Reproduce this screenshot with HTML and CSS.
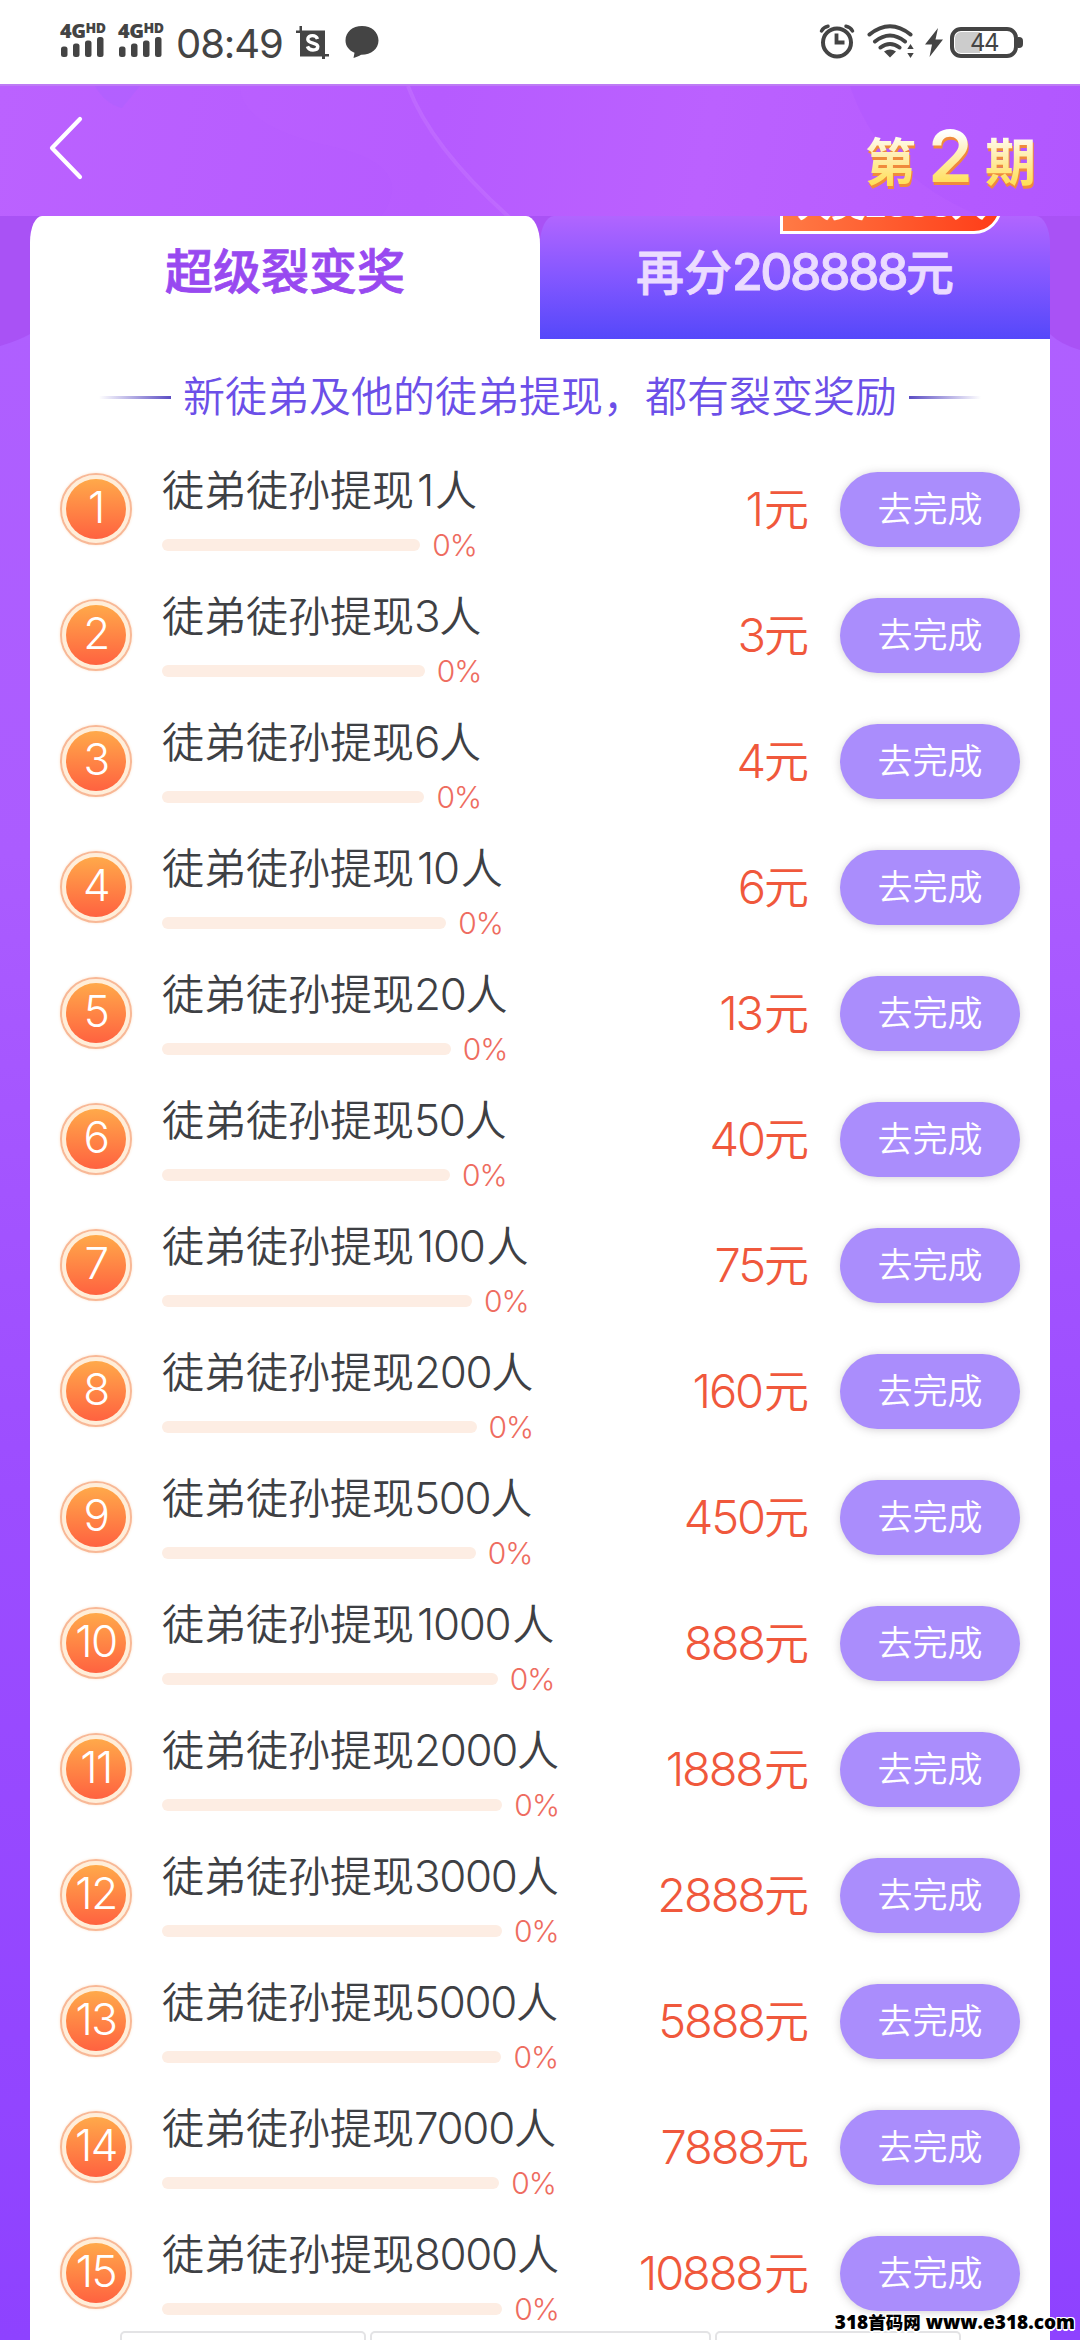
FILE: index.html
```html
<!DOCTYPE html>
<html lang="zh-CN">
<head>
<meta charset="utf-8">
<title>超级裂变奖</title>
<link rel="stylesheet" href="styles.css">
</head>
<body>
<header class="status">
  <div class="sim"><div class="net">4G<sup>HD</sup></div>
    <svg width="43" height="20" viewBox="0 0 43 20"><rect x="0" y="9.5" width="6.5" height="10.5" rx="2.5"/><rect x="12" y="6.5" width="6.5" height="13.5" rx="2.5"/><rect x="24" y="3.5" width="6.5" height="16.5" rx="2.5"/><rect x="36" y="0" width="6.5" height="20" rx="2.5"/></svg></div>
  <div class="sim"><div class="net">4G<sup>HD</sup></div>
    <svg width="43" height="20" viewBox="0 0 43 20"><rect x="0" y="9.5" width="6.5" height="10.5" rx="2.5"/><rect x="12" y="6.5" width="6.5" height="13.5" rx="2.5"/><rect x="24" y="3.5" width="6.5" height="16.5" rx="2.5"/><rect x="36" y="0" width="6.5" height="20" rx="2.5"/></svg></div>
  <time class="clock">08:49</time>
  <svg class="crop-icon" width="33" height="33" viewBox="0 0 33 33"><path d="M0 4.5h29v23.500h4v2.500h-4v2.500h-3v-2.500H4V7H0zM3.500 0h2.500v6h-2.500z"/><path d="M21.500 13c-.8-2.300-2.600-3.400-5-3.400-2.800 0-4.700 1.400-4.700 3.600 0 5 10 2.700 10 7.300 0 2.200-2 3.500-4.800 3.500-3 0-4.800-1.300-5.600-3.600" fill="none" stroke="#fff" stroke-width="3.400"/></svg>
  <svg class="bubble" width="34" height="32" viewBox="0 0 34 32"><path d="M17 0c9.500 0 16.500 6 16.500 14.500S26 29 16 28.800c-2 1.200-4.500 2.600-7.500 3.200l1-5.200C4 24.500.5 20 .5 14.500.5 6 7.500 0 17 0z"/></svg>
  <div class="status-right">
    <svg class="outline" width="36" height="36" viewBox="0 0 36 36" stroke="#444" stroke-linecap="round"><circle cx="18" cy="19.500" r="14" stroke-width="4"/><path d="M17.500 10.500V19.500H25.500" stroke-width="3.800" stroke-linecap="butt"/><path d="M2.500 8Q4.500 4 9 3.200M27 3.200Q31.500 4 33.500 8" stroke-width="3.500"/></svg>
    <svg class="outline wifi" width="47" height="36" viewBox="0 0 47 36" stroke="#444" stroke-width="4" stroke-linecap="round"><path d="M2.500 11.500Q23 -5 43.500 11.500M8 18.500Q23 6.500 38 18.500M13.500 24.500Q23 17.500 32.500 24.500"/><path d="M17 28.500Q23 24.500 29 28.500L23 34.500z" fill="#444" stroke="none"/><path d="M43.500 21l3.200 5h-6.400zM43.500 35l3.200-5h-6.400z" fill="#444" stroke="none"/></svg>
    <svg class="bolt" width="18" height="29" viewBox="0 0 18 29"><path d="M13 0L0 16.500h7L4.500 29 18 11.500h-7.500z"/></svg>
    <div class="battery"><i class="level"></i><span>44</span></div>
  </div>
</header>
<nav class="topbar">
  <svg class="rays" width="1080" height="130" viewBox="0 0 1080 130"><path class="outline" d="M408 0Q430 60 510 132" stroke="#c87aff" stroke-width="4" opacity=".45"/><path d="M0 0H408Q430 60 510 132H380Q420 80 330 60T240 0z" fill="#bd66ff" opacity=".2"/><path d="M850 0Q880 90 985 132H1080V0z" fill="#a94fff" opacity=".18"/><path d="M95 0Q105 18 122 22L140 0z" fill="#a060ff" opacity=".25"/></svg>
  <svg class="outline back" width="34" height="66" viewBox="0 0 34 66"><path d="M31 3L3 32 31 61" stroke="#fff" stroke-width="4.200" stroke-linecap="round" stroke-linejoin="round"/></svg>
  <div class="period"><span>第</span><b>2</b><span>期</span></div>
</nav>
<main class="stage">
  <svg class="waves" width="1080" height="160" viewBox="0 0 1080 160"><path d="M0 0H1080V134Q1060 128 1050 118H30Q20 124 0 130z" fill="#a74ef2" opacity=".75"/></svg>
  <section class="panel">
    <div class="tabs">
      <div class="tab active"><span>超级裂变奖</span></div>
      <div class="tab other"><span>再分<i class="n">208888</i>元</span>
        <div class="ribbon"><span>大奖2888人</span></div></div>
    </div>
    <div class="subtitle"><i class="line"></i><span>新徒弟及他的徒弟提现，都有裂变奖励</span><i class="line flip"></i></div>
    <ul class="tasks">
      <li class="task"><b class="badge">1</b><div class="info"><p>徒弟徒孙提现<i class="n one">1</i>人</p><div class="progress"><i class="bar"></i><em>0%</em></div></div><strong class="money"><i class="n one">1</i>元</strong><button>去完成</button></li>
      <li class="task"><b class="badge">2</b><div class="info"><p>徒弟徒孙提现<i class="n">3</i>人</p><div class="progress"><i class="bar"></i><em>0%</em></div></div><strong class="money"><i class="n">3</i>元</strong><button>去完成</button></li>
      <li class="task"><b class="badge">3</b><div class="info"><p>徒弟徒孙提现<i class="n">6</i>人</p><div class="progress"><i class="bar"></i><em>0%</em></div></div><strong class="money"><i class="n">4</i>元</strong><button>去完成</button></li>
      <li class="task"><b class="badge">4</b><div class="info"><p>徒弟徒孙提现<i class="n one">10</i>人</p><div class="progress"><i class="bar"></i><em>0%</em></div></div><strong class="money"><i class="n">6</i>元</strong><button>去完成</button></li>
      <li class="task"><b class="badge">5</b><div class="info"><p>徒弟徒孙提现<i class="n">20</i>人</p><div class="progress"><i class="bar"></i><em>0%</em></div></div><strong class="money"><i class="n one">13</i>元</strong><button>去完成</button></li>
      <li class="task"><b class="badge">6</b><div class="info"><p>徒弟徒孙提现<i class="n">50</i>人</p><div class="progress"><i class="bar"></i><em>0%</em></div></div><strong class="money"><i class="n">40</i>元</strong><button>去完成</button></li>
      <li class="task"><b class="badge">7</b><div class="info"><p>徒弟徒孙提现<i class="n one">100</i>人</p><div class="progress"><i class="bar"></i><em>0%</em></div></div><strong class="money"><i class="n">75</i>元</strong><button>去完成</button></li>
      <li class="task"><b class="badge">8</b><div class="info"><p>徒弟徒孙提现<i class="n">200</i>人</p><div class="progress"><i class="bar"></i><em>0%</em></div></div><strong class="money"><i class="n one">160</i>元</strong><button>去完成</button></li>
      <li class="task"><b class="badge">9</b><div class="info"><p>徒弟徒孙提现<i class="n">500</i>人</p><div class="progress"><i class="bar"></i><em>0%</em></div></div><strong class="money"><i class="n">450</i>元</strong><button>去完成</button></li>
      <li class="task"><b class="badge">10</b><div class="info"><p>徒弟徒孙提现<i class="n one">1000</i>人</p><div class="progress"><i class="bar"></i><em>0%</em></div></div><strong class="money"><i class="n">888</i>元</strong><button>去完成</button></li>
      <li class="task"><b class="badge">11</b><div class="info"><p>徒弟徒孙提现<i class="n">2000</i>人</p><div class="progress"><i class="bar"></i><em>0%</em></div></div><strong class="money"><i class="n one">1888</i>元</strong><button>去完成</button></li>
      <li class="task"><b class="badge">12</b><div class="info"><p>徒弟徒孙提现<i class="n">3000</i>人</p><div class="progress"><i class="bar"></i><em>0%</em></div></div><strong class="money"><i class="n">2888</i>元</strong><button>去完成</button></li>
      <li class="task"><b class="badge">13</b><div class="info"><p>徒弟徒孙提现<i class="n">5000</i>人</p><div class="progress"><i class="bar"></i><em>0%</em></div></div><strong class="money"><i class="n">5888</i>元</strong><button>去完成</button></li>
      <li class="task"><b class="badge">14</b><div class="info"><p>徒弟徒孙提现<i class="n">7000</i>人</p><div class="progress"><i class="bar"></i><em>0%</em></div></div><strong class="money"><i class="n">7888</i>元</strong><button>去完成</button></li>
      <li class="task"><b class="badge">15</b><div class="info"><p>徒弟徒孙提现<i class="n">8000</i>人</p><div class="progress"><i class="bar"></i><em>0%</em></div></div><strong class="money"><i class="n one">10888</i>元</strong><button>去完成</button></li>
    </ul>
    <div class="peek"><i></i><i></i><i></i></div>
  </section>
</main>
<div class="watermark">318<span>首码网</span> www.e318.com</div>
</body>
</html>
```
FILE: styles.css
```css
* { box-sizing: border-box; }
html, body { margin: 0; padding: 0; }
body {
  position: relative;
  width: 1080px;
  height: 2340px;
  overflow: hidden;
  display: flex;
  flex-direction: column;
  background: #fff;
  font-family: Inter, "Noto Sans CJK SC", sans-serif;
  font-weight: 350;
  color: #444;
}
i, em { font-style: normal; }
svg { display: block; fill: #444; }
.outline { fill: none; }

.status {
  height: 84px;
  flex: none;
  display: flex;
  align-items: flex-start;
  padding: 0 57px 0 60px;
}
.sim { width: 58px; padding-top: 21px; }
.sim svg { margin: 0 0 0 1px; }
.net {
  height: 16px;
  font: 800 20px/17px "Open Sans", sans-serif;
  letter-spacing: -0.5px;
  white-space: nowrap;
}
.net sup {
  font-size: 14px;
  line-height: 1;
  vertical-align: 5px;
}
.clock {
  width: 120px;
  padding-top: 19px;
  font-size: 40px;
  line-height: 49px;
  font-weight: 400;
  letter-spacing: -1.1px;
}
.crop-icon { margin-top: 26px; }
.bubble { margin: 26px 0 0 16px; }
.status-right {
  margin-left: auto;
  display: flex;
  align-items: flex-start;
  padding-top: 23px;
}
.wifi { margin-left: 12px; }
.bolt { margin: 5px 7px 0 11px; }
.battery {
  position: relative;
  width: 68px;
  height: 31px;
  margin: 4px 5px 0 0;
  border: 4px solid #444;
  border-radius: 11px;
  text-align: center;
  font: 400 24px/23px Inter, sans-serif;
  letter-spacing: -1.5px;
}
.battery::after {
  content: "";
  position: absolute;
  left: 64px;
  top: 6px;
  width: 5px;
  height: 11px;
  border-radius: 0 4px 4px 0;
  background: #444;
}
.battery span { position: relative; }
.level {
  position: absolute;
  left: 1px;
  top: 1px;
  width: 25px;
  height: 21px;
  border-radius: 6px 0 0 6px;
  background: #ccc;
}

.topbar {
  position: relative;
  z-index: 1;
  height: 132px;
  flex: none;
  display: flex;
  justify-content: space-between;
  background: linear-gradient(100deg, #bb62ff 0%, #b65bff 40%, #bb61ff 65%, #b45aff 100%);
  border-top: 2px solid #bd7cf4;
}
.rays { position: absolute; left: 0; top: 0; }
.back { position: relative; margin: 30px 0 0 49px; }
.period {
  position: relative;
  display: flex;
  margin-right: 44px;
  font-weight: 700;
  font-size: 51px;
  line-height: 76px;
  color: transparent;
  background: linear-gradient(180deg, #fff 42%, #fff1c0 58%, #ffdc4a 92%);
  background-clip: text;
  -webkit-background-clip: text;
  filter: drop-shadow(1px 3px 0 #f08a3c);
  height: 112px;
  padding-top: 39px;
}
.period b { width: 69px; text-align: center; font-size: 72px; line-height: 61px; font-weight: 600; }

.stage {
  position: relative;
  flex: 1;
  min-height: 0;
  padding: 0 30px;
  background: linear-gradient(180deg, #b060ff 0%, #ab5cff 30%, #9c4dff 60%, #8e42ff 100%);
}
.waves { position: absolute; left: 0; top: 0; }
.panel {
  position: relative;
  height: 2124px;
  display: flex;
  flex-direction: column;
  border-radius: 26px 26px 0 0;
  background: linear-gradient(#fff, #fff) 0 40px no-repeat;
}
.tabs { flex: none; display: flex; height: 123px; }
.tab {
  flex: 1;
  display: flex;
  justify-content: center;
  height: 123px;
  padding-top: 21px;
  font-size: 48px;
  line-height: 70px;
  font-weight: 500;
  -webkit-text-stroke: 0.8px currentColor;
}
.tab.active {
  background: #fff;
  border-radius: 12px 14px 0 0 / 26px 28px 0 0;
  color: #9849f0;
}
.tab.other {
  position: relative;
  overflow: hidden;
  background: linear-gradient(180deg, #b165ff 0%, #8357ff 50%, #5548fa 100%);
  border-radius: 14px 14px 0 0 / 28px 28px 0 0;
  color: #ebdcff;
}
.tab .n { letter-spacing: -0.052em; }
.ribbon {
  position: absolute;
  left: 240px;
  bottom: 105px;
  width: 222px;
  height: 56px;
  border: 3px solid #fff;
  border-radius: 0 30px 30px 0;
  background: linear-gradient(90deg, #ff7a45, #ff3d18);
  color: #fff;
  text-align: center;
  font-size: 35px;
  line-height: 46px;
  font-weight: 700;
  white-space: nowrap;
  letter-spacing: -1px;
  -webkit-text-stroke: 0;
}
.n { font-size: 1.045em; letter-spacing: -0.03em; }
.n.one { margin: 0 2px 0 3px; }
.subtitle {
  flex: none;
  height: 107px;
  padding-top: 9px;
  display: flex;
  justify-content: center;
  align-items: center;
  font-size: 42px;
  line-height: 60px;
  color: #6c4fe8;
}
.subtitle span { white-space: nowrap; }
.line {
  width: 72px;
  height: 3px;
  margin-right: 12px;
  background: linear-gradient(90deg, transparent, #5b4dc4);
}
.line.flip { margin: 0 0 0 12px; transform: scaleX(-1); }

.tasks { flex: none; list-style: none; margin: 0; padding: 0; }
.task {
  height: 126px;
  display: flex;
  align-items: center;
  padding: 0 30px;
}
.badge {
  width: 72px;
  height: 72px;
  flex: none;
  border-radius: 50%;
  border: 2px solid #f8b896;
  background: linear-gradient(180deg, #ffa94a, #ff6240) content-box, #ffeed9;
  padding: 4px;
  text-align: center;
  font-size: 44px;
  line-height: 57px;
  font-weight: 350;
  letter-spacing: -1.5px;
  color: #fff;
  box-shadow: 0 0 3px #fde3cd;
  background-clip: content-box, padding-box;
}
.info {
  align-self: flex-start;
  margin: 18px 0 0 30px;
  display: flex;
  flex-direction: column;
}
.info p {
  margin: 0;
  height: 52px;
  line-height: 52px;
  font-size: 42px;
  white-space: nowrap;
  color: #3e4044;
}
.progress { display: flex; align-items: center; height: 36px; margin-top: 11px; }
.bar { flex: 1; height: 12px; border-radius: 6px; background: #fdede3; }
.progress em { margin-left: 12px; font-size: 30px; line-height: 36px; letter-spacing: -1px; color: #ee6c60; }
.money {
  margin-left: auto;
  font-size: 45px;
  line-height: 60px;
  font-weight: 350;
  color: #f0583c;
}
.money .n { letter-spacing: -0.045em; }
.task button {
  width: 180px;
  height: 75px;
  flex: none;
  margin: 0 0 0 31px;
  padding: 0;
  border: 0;
  border-radius: 38px;
  background: #aa8dfc;
  box-shadow: 0 1px 8px rgba(110, 100, 110, .3);
  color: #fff;
  font: 350 35px/73px Inter, "Noto Sans CJK SC", sans-serif;
}
.peek {
  position: absolute;
  top: 2115px;
  left: 0;
  height: 9px;
  overflow: hidden;
  display: flex;
  gap: 4px;
  padding-left: 90px;
}
.peek i {
  width: 246px;
  height: 30px;
  border: 2px solid #e3e3e5;
  border-radius: 5px;
  background: #fff;
}
.peek i:nth-child(2) { width: 341px; }
.watermark {
  position: absolute;
  right: 5px;
  top: 2309px;
  font: 800 19px/26px "Open Sans", "Noto Sans CJK SC", sans-serif;
  color: #000;
  white-space: nowrap;
  text-shadow: 1px 1px #fff, -1px -1px #fff, 1px -1px #fff, -1px 1px #fff, 0 2px #fff;
}
.watermark span { font-size: 17.5px; font-weight: 900; }
```
